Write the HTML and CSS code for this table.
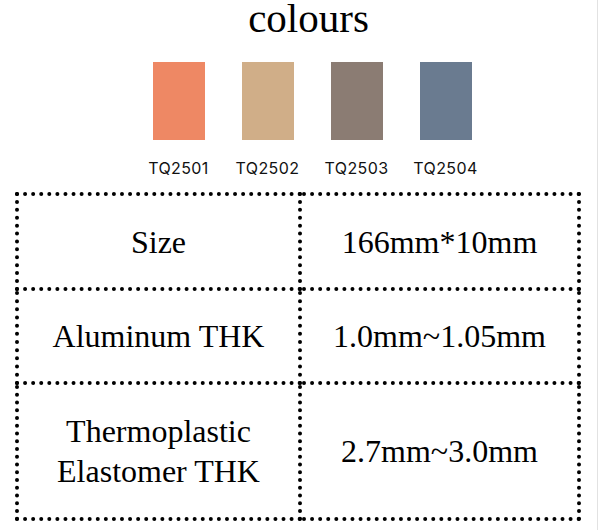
FILE: index.html
```html
<!DOCTYPE html>
<html lang="en">
<head>
  <meta charset="UTF-8" />
  <title>Colours and specs</title>
  <link rel="stylesheet" href="styles.css">
</head>
<body>
  <div class="page">
    <h1 class="title">colours</h1>

    <div class="swatches">
      <div class="swatch-item">
        <div class="swatch tq2501"></div>
        <span class="code">TQ2501</span>
      </div>
      <div class="swatch-item">
        <div class="swatch tq2502"></div>
        <span class="code">TQ2502</span>
      </div>
      <div class="swatch-item">
        <div class="swatch tq2503"></div>
        <span class="code">TQ2503</span>
      </div>
      <div class="swatch-item">
        <div class="swatch tq2504"></div>
        <span class="code">TQ2504</span>
      </div>
    </div>

    <table class="specs">
      <colgroup>
        <col class="col-name">
        <col class="col-value">
      </colgroup>
      <tr class="row-size">
        <td>Size</td>
        <td>166mm*10mm</td>
      </tr>
      <tr class="row-alu">
        <td>Aluminum THK</td>
        <td>1.0mm~1.05mm</td>
      </tr>
      <tr class="row-tpe">
        <td>Thermoplastic<br>Elastomer THK</td>
        <td>2.7mm~3.0mm</td>
      </tr>
    </table>
  </div>
</body>
</html>
```

FILE: styles.css
```css
body {
  margin: 0;
  padding: 0;
  background: #fff;
  color: #000;
}
.page {
  width: 597px;
  height: 530px;
  border-right: 1px solid #e2e2e2;
  overflow: hidden;
}
.title {
  font-family: "Liberation Serif", serif;
  font-weight: normal;
  font-size: 41px;
  line-height: 40px;
  text-align: center;
  margin: -2px 0 0 0;
  padding-left: 20px;
}
.swatches {
  display: flex;
  padding-left: 134px;
  margin-top: 24px;
}
.swatch-item {
  width: 89px;
  display: flex;
  flex-direction: column;
  align-items: center;
}
.swatch {
  width: 52px;
  height: 78px;
}
.tq2501 { background: #ee8864; }
.tq2502 { background: #d0ae88; }
.tq2503 { background: #8b7c73; }
.tq2504 { background: #6a7b90; }
.code {
  font-family: Inter, sans-serif;
  font-size: 16px;
  letter-spacing: 0.4px;
  margin-top: 18px;
  line-height: 20px;
  color: #111;
}
.specs {
  border-collapse: collapse;
  table-layout: fixed;
  margin: 14px 0 0 15px;
  width: 566px;
  font-family: "Liberation Serif", serif;
  font-size: 32px;
  line-height: 40px;
  text-align: center;
}
.col-name { width: 283px; }
.specs td {
  border: 4px dotted #000;
  padding: 0;
}
.row-size td { height: 91px; }
.row-alu td { height: 90px; }
.row-tpe td { height: 132px; }
```
